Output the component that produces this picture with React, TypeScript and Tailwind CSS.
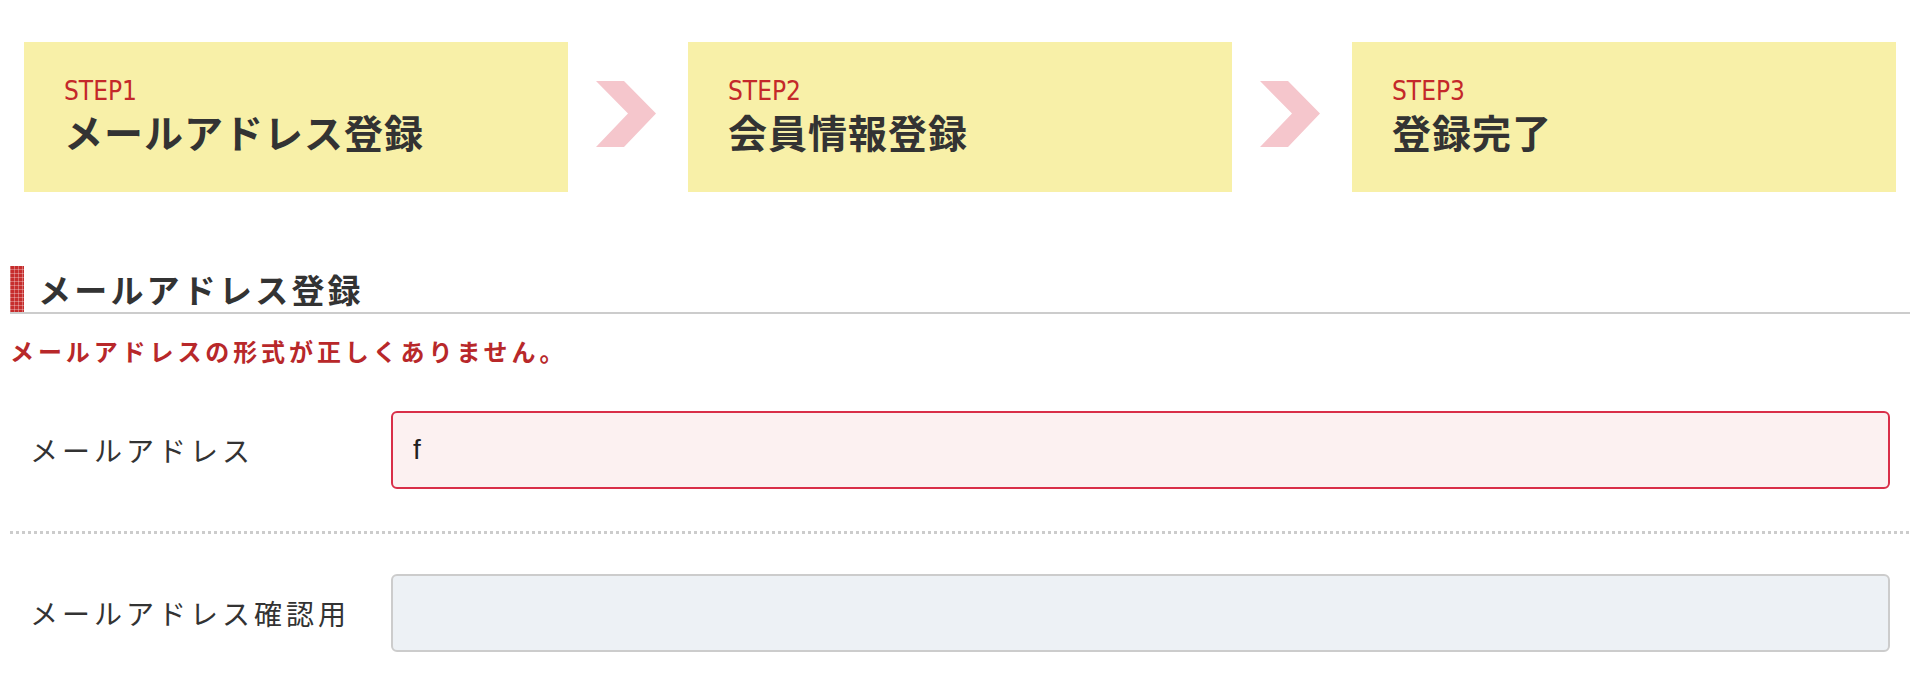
const JP = "font-['Noto_Sans_CJK_JP','Noto_Sans',sans-serif]";

const STEPS = [
  { no: 'STEP1', title: 'メールアドレス登録' },
  { no: 'STEP2', title: '会員情報登録' },
  { no: 'STEP3', title: '登録完了' },
];

function Chevron() {
  return (
    <svg width="60" height="66" viewBox="0 0 60 66" className="block">
      <polygon points="0,0 28,0 60,32.5 28,66 0,66 32,32.5" fill="#f5c6cc" />
    </svg>
  );
}

function StepBox({ no, title }: { no: string; title: string }) {
  return (
    <div className="flex h-[150px] w-[544px] shrink-0 flex-col justify-center bg-[#f8f0a8] pl-[40px] pb-[2px]">
      <span className="font-['DejaVu_Sans_Condensed','DejaVu_Sans',sans-serif] text-[26px] leading-[28px] text-[#c4282a]">
        {no}
      </span>
      <span className={`${JP} mt-[1px] text-[39px] font-bold leading-[50px] tracking-[1px] text-[#333]`}>
        {title}
      </span>
    </div>
  );
}

function Field({
  label,
  value,
  error,
}: {
  label: string;
  value?: string;
  error?: boolean;
}) {
  return (
    <div className="flex items-center">
      <label className={`${JP} w-[381px] shrink-0 pl-[20px] text-[28px] tracking-[4px] text-[#333]`}>
        {label}
      </label>
      <input
        type="text"
        defaultValue={value}
        readOnly
        className={`h-[78px] w-[1499px] rounded-[6px] border-2 px-[20px] font-['Liberation_Sans',sans-serif] text-[28px] text-[#222] outline-none ${
          error ? 'border-[#d92f49] bg-[#fcf1f1]' : 'border-[#cccccc] bg-[#edf1f5]'
        }`}
      />
    </div>
  );
}

export default function App() {
  return (
    <div className="min-h-[678px] w-full bg-white">
      <div className="flex items-center pt-[42px] pl-[24px]">
        <StepBox {...STEPS[0]} />
        <div className="flex w-[120px] shrink-0 justify-center pr-[4px] pb-[6px]">
          <Chevron />
        </div>
        <StepBox {...STEPS[1]} />
        <div className="flex w-[120px] shrink-0 justify-center pr-[4px] pb-[6px]">
          <Chevron />
        </div>
        <StepBox {...STEPS[2]} />
      </div>

      <div className="ml-[10px] w-[1900px]">
        <div className="mt-[74px] flex items-center border-b-2 border-[#cccccc]">
          <div className="h-[46px] w-[14px] shrink-0 bg-[#c62d2d] bg-[linear-gradient(90deg,rgba(255,255,255,0.3)_1px,transparent_1px),linear-gradient(0deg,rgba(255,255,255,0.3)_1px,transparent_1px)] bg-[length:4px_4px]" />
          <h2 className={`${JP} pl-[14px] text-[33px] font-bold leading-[46px] tracking-[3.2px] text-[#333]`}>
            メールアドレス登録
          </h2>
        </div>

        <p className={`${JP} mt-[19px] text-[24px] font-bold leading-[36px] tracking-[3.9px] text-[#b8282a]`}>
          メールアドレスの形式が正しくありません。
        </p>

        <div className="pt-[42px] pb-[42px]">
          <Field label="メールアドレス" value="f" error />
        </div>

        <div className="h-[3px] w-full bg-[linear-gradient(90deg,#cccccc_50%,transparent_50%)] bg-[length:6px_3px]" />

        <div className="pt-[40px] pb-[30px]">
          <Field label="メールアドレス確認用" />
        </div>
      </div>
    </div>
  );
}
